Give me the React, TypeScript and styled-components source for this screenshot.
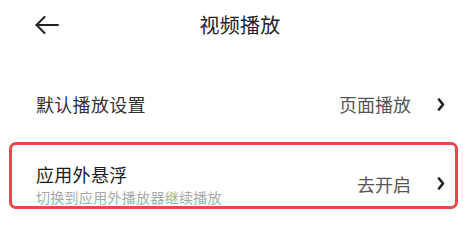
import styled, { createGlobalStyle } from 'styled-components';

const GlobalStyle = createGlobalStyle`
	body {
		margin: 0;
		background: #ffffff;
		font-family: 'Noto Sans CJK SC', 'Noto Sans', sans-serif;
	}
`;

function BackArrow() {
	return (
		<svg width="24" height="18" viewBox="0 0 24 18" fill="none">
			<path d="M1.5 9H23" stroke="#222" strokeWidth="2" strokeLinecap="round" />
			<path
				d="M9.5 1L1.5 9L9.5 17"
				stroke="#222"
				strokeWidth="2"
				strokeLinecap="round"
				strokeLinejoin="round"
			/>
		</svg>
	);
}

function Chevron() {
	return (
		<svg width="8" height="13" viewBox="0 0 8 13" fill="none">
			<path
				d="M2 1.5L6 6.5L2 11.5"
				stroke="#222"
				strokeWidth="2.6"
				strokeLinecap="round"
				strokeLinejoin="round"
			/>
		</svg>
	);
}

export default function App() {
	return (
		<>
			<GlobalStyle />
			<Page>
				<Header>
					<BackButton>
						<BackArrow />
					</BackButton>
					<Title>视频播放</Title>
					<span />
				</Header>
				<SettingRow>
					<Label>默认播放设置</Label>
					<Trailing>
						<Value>页面播放</Value>
						<Chevron />
					</Trailing>
				</SettingRow>
				<Highlight>
					<Texts>
						<Label $strong>应用外悬浮</Label>
						<Hint>切换到应用外播放器继续播放</Hint>
					</Texts>
					<Trailing $offset>
						<Value>去开启</Value>
						<Chevron />
					</Trailing>
				</Highlight>
			</Page>
		</>
	);
}

const Page = styled.div`
	width: 470px;
	height: 223px;
	overflow: hidden;
	display: flex;
	flex-direction: column;
`;

const Header = styled.div`
	height: 52px;
	display: grid;
	grid-template-columns: 1fr auto 1fr;
	align-items: center;
`;

const BackButton = styled.div`
	display: flex;
	align-items: center;
	padding-left: 35px;
	padding-bottom: 2px;
`;

const Title = styled.div`
	font-size: 20px;
	line-height: 26px;
	color: #222;
	letter-spacing: 0.3px;
	padding-left: 10px;
	padding-bottom: 2px;
`;

const SettingRow = styled.div`
	margin-top: 24px;
	height: 56px;
	padding: 0 25px 0 36px;
	display: flex;
	align-items: center;
	justify-content: space-between;
`;

const Label = styled.div<{ $strong?: boolean }>`
	font-size: 18px;
	line-height: 24px;
	color: ${p => (p.$strong ? '#1c1c1c' : '#333')};
	letter-spacing: 0.3px;
`;

const Trailing = styled.div<{ $offset?: boolean }>`
	display: flex;
	align-items: center;
	gap: 26px;
	margin-top: ${p => (p.$offset ? '16px' : '0')};
`;

const Value = styled.div`
	font-size: 18px;
	line-height: 24px;
	color: #555;
`;

const Highlight = styled.div`
	margin: 10px 12px 0 9px;
	height: 61px;
	border: 3px solid #e8464a;
	border-radius: 7px;
	padding: 0 10px 0 24px;
	display: flex;
	align-items: center;
	justify-content: space-between;
`;

const Texts = styled.div`
	align-self: flex-start;
	display: flex;
	flex-direction: column;
	padding-top: 17px;
`;

const Hint = styled.div`
	font-size: 14px;
	line-height: 18px;
	margin-top: 2px;
	color: #a9a9a9;
	letter-spacing: 0.3px;
`;
